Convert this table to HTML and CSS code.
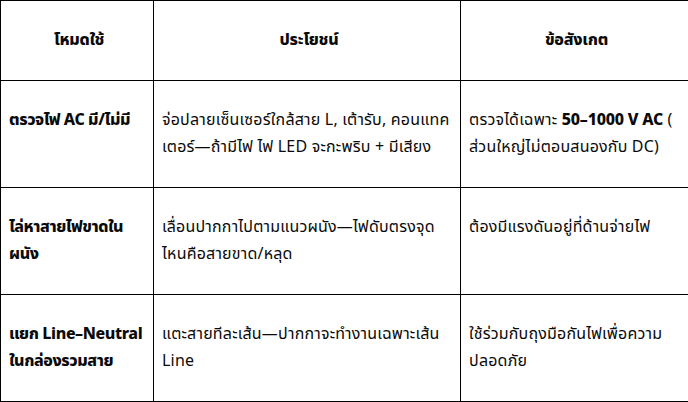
FILE: index.html
```html
<!DOCTYPE html>
<html lang="th">
<head>
<meta charset="utf-8">
<link rel="stylesheet" href="styles.css">
</head>
<body>
<table class="guide">
  <colgroup>
    <col class="c1"><col class="c2"><col class="c3">
  </colgroup>
  <thead>
    <tr><th>โหมดใช้</th><th>ประโยชน์</th><th>ข้อสังเกต</th></tr>
  </thead>
  <tbody>
    <tr>
      <td class="mode">ตรวจไฟ AC มี/ไม่มี</td>
      <td>จ่อปลายเซ็นเซอร์ใกล้สาย L, เต้ารับ, คอนแทค<br>เตอร์—ถ้ามีไฟ ไฟ LED จะกะพริบ + มีเสียง</td>
      <td>ตรวจได้เฉพาะ <b>50–1000 V AC</b> (<br>ส่วนใหญ่ไม่ตอบสนองกับ DC)</td>
    </tr>
    <tr>
      <td class="mode">ไล่หาสายไฟขาดใน<br>ผนัง</td>
      <td>เลื่อนปากกาไปตามแนวผนัง—ไฟดับตรงจุด<br>ไหนคือสายขาด/หลุด</td>
      <td>ต้องมีแรงดันอยู่ที่ด้านจ่ายไฟ</td>
    </tr>
    <tr>
      <td class="mode">แยก Line–Neutral<br>ในกล่องรวมสาย</td>
      <td>แตะสายทีละเส้น—ปากกาจะทำงานเฉพาะเส้น<br>Line</td>
      <td>ใช้ร่วมกับถุงมือกันไฟเพื่อความ<br>ปลอดภัย</td>
    </tr>
  </tbody>
</table>
</body>
</html>
```
FILE: styles.css
```css
html, body {
  margin: 0;
  padding: 0;
  background: #fff;
}
body {
  font-family: "Noto Sans Thai", "Noto Sans", "DejaVu Sans", sans-serif;
  font-size: 16px;
  letter-spacing: 0.2px;
  color: #0a0a0a;
}
.guide {
  width: 688px;
  border-collapse: collapse;
  table-layout: fixed;
}
.c1 { width: 153px; }
.c2 { width: 307px; }
.c3 { width: 228px; }
.guide th,
.guide td {
  border: 1px solid #000;
  padding: 26px 4px 26px 8px;
  line-height: 27px;
  vertical-align: top;
  text-align: left;
  white-space: nowrap;
}
.guide th {
  text-align: center;
  font-weight: 800;
  letter-spacing: -0.2px;
}
.guide .mode {
  font-weight: 800;
  letter-spacing: -0.4px;
}
.guide b {
  font-weight: 800;
  letter-spacing: -0.2px;
}
```
